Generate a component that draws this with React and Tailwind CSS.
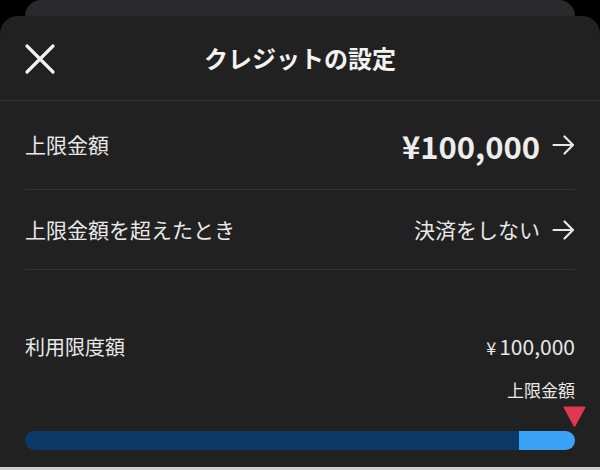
const font = { fontFamily: '"Noto Sans CJK JP", "Noto Sans", sans-serif' };

function Arrow() {
  return (
    <svg width="23" height="20" viewBox="0 0 23 20" fill="none">
      <path d="M1.5 10 H21 M12.5 1.5 L21 10 L12.5 18.5" stroke="#e8e8e8" strokeWidth="2.2" strokeLinecap="round" strokeLinejoin="round" />
    </svg>
  );
}

function Row({ label, children, height }) {
  return (
    <div className={`mx-[25px] flex items-center justify-between border-b border-[#363636] ${height}`}>
      <span className="text-[21px] text-[#e8e8e8]">{label}</span>
      <div className="flex items-center gap-[12px]">
        {children}
        <Arrow />
      </div>
    </div>
  );
}

export default function App() {
  return (
    <div className="w-[600px] h-[470px] bg-black flex flex-col overflow-hidden" style={font}>
      <div className="mx-[25px] h-[16px] shrink-0 rounded-t-[16px] bg-[#2a2a2c]" />
      <div className="flex-1 rounded-t-[18px] bg-[#212121] flex flex-col">
        <div className="relative h-[85px] shrink-0 flex items-center justify-center border-b border-[#363636]">
          <svg className="absolute left-[24px] top-[27px]" width="32" height="32" viewBox="0 0 32 32">
            <path d="M3 3 L29 29 M29 3 L3 29" stroke="#f2f2f2" strokeWidth="3.2" strokeLinecap="round" />
          </svg>
          <h1 className="text-[24px] font-semibold text-[#f2f2f2]">クレジットの設定</h1>
        </div>
        <Row label="上限金額" height="h-[89px]">
          <span className="text-[31px] font-bold text-[#ededed] leading-none">¥100,000</span>
        </Row>
        <Row label="上限金額を超えたとき" height="h-[80px]">
          <span className="text-[21px] text-[#e8e8e8]">決済をしない</span>
        </Row>
        <div className="mx-[25px] mt-[63px] flex items-center justify-between text-[#e8e8e8]">
          <span className="text-[20px] leading-[26px]">利用限度額</span>
          <span className="text-[21px] leading-[26px]">
            <span className="text-[18px] mr-[3px]">¥</span>100,000
          </span>
        </div>
        <div className="mx-[25px] mt-[19px] flex justify-end text-[17px] leading-[22px] text-[#e8e8e8]">
          上限金額
        </div>
        <div className="mx-[25px] mt-[5px] flex justify-end">
          <svg className="mr-[-11px]" width="23" height="21" viewBox="0 0 23 21">
            <path d="M1.5 0.5 H21.5 Q23 0.5 22.2 2 L12.5 20 Q11.5 21.5 10.5 20 L0.8 2 Q0 0.5 1.5 0.5 Z" fill="#e0394f" />
          </svg>
        </div>
        <div className="mx-[25px] mt-[4px] h-[19px] shrink-0 rounded-full bg-[#0b3a68] overflow-hidden flex justify-end">
          <div className="w-[56px] h-full bg-[#3aa2f7]" />
        </div>
        <div className="flex-1" />
        <div className="h-[3px] bg-[#cfcfcf]" />
      </div>
    </div>
  );
}
